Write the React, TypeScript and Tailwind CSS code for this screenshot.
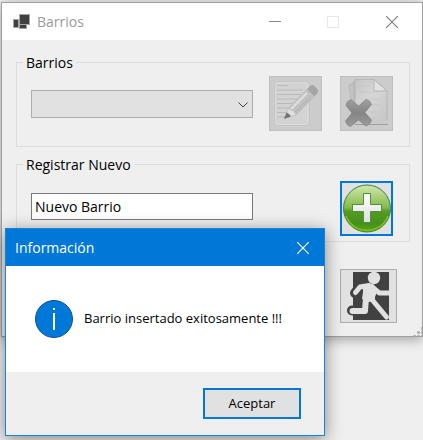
import type { ReactNode } from 'react';

const SANS = "font-['Open_Sans','Noto_Sans',sans-serif]";

function AppIcon() {
  return (
    <svg width="18" height="16" viewBox="0 0 18 16" aria-hidden="true">
      <path fill="#a6a6a6" d="M6 0h11v11H14v4H6v-1H0V5h6z" />
      <path fill="#404040" d="M7 1h9v9H7zM1 6h4v7H1zM7 11h6v3H7z" />
    </svg>
  );
}

function EditIcon() {
  return (
    <svg width="51" height="53" viewBox="0 0 51 53" aria-hidden="true">
      <defs>
        <linearGradient id="pencil" x1="0" y1="0" x2="1" y2="1">
          <stop offset="0" stopColor="#d5d5d5" />
          <stop offset="1" stopColor="#b0b0b0" />
        </linearGradient>
      </defs>
      <rect x="4.5" y="4.5" width="35" height="44" rx="3" fill="#d3d3d3" stroke="#c6c6c6" />
      <rect x="5.5" y="5.5" width="32" height="42" rx="2" fill="none" stroke="#dadada" />
      <path
        stroke="#bababa"
        d="M7 8.500h11M7 13h26M7 17.500h26M7 22h24M7 26.500h19M7 31h13M7 35.500h11M7 40h8"
      />
      <path fill="url(#pencil)" stroke="#b4b4b4" strokeWidth=".6" d="M18.500 31 37 12l7 7.500L26 38z" />
      <path fill="none" stroke="#dedede" strokeWidth="2" d="m21 32 17-17" />
      <path fill="none" stroke="#b0b0b0" strokeWidth="1" d="m24 36 18-18" />
      <path fill="#e0e0e0" stroke="#b8b8b8" strokeWidth=".6" d="m18.500 31-3.500 10L26 38l-2-4-3-1z" />
      <path fill="#747474" d="m16.500 35.500-2.500 6.500 7-2.500-2-2.500z" />
      <path fill="#c2c2c2" d="m35 14 2-2 7.500 7.500-2 2z" />
      <path fill="#a6a6a6" d="m37 12 3-3q2-2 4.500 0l3 3q1.500 2 0 4l-3 3.500z" />
    </svg>
  );
}

function DeleteIcon() {
  return (
    <svg width="51" height="53" viewBox="0 0 51 53" aria-hidden="true">
      <defs>
        <linearGradient id="sheet" x1="0" y1="0" x2="1" y2="1">
          <stop offset="0" stopColor="#c5c5c5" />
          <stop offset=".45" stopColor="#d6d6d6" />
          <stop offset="1" stopColor="#c6c6c6" />
        </linearGradient>
        <linearGradient id="cross" x1="0" y1="0" x2="0" y2="1">
          <stop offset="0" stopColor="#a0a0a0" />
          <stop offset=".5" stopColor="#858585" />
          <stop offset="1" stopColor="#9c9c9c" />
        </linearGradient>
      </defs>
      <path fill="#c2c2c2" stroke="#b4b4b4" strokeWidth=".7" d="m8 8 5-2v18h-3zM10 7l4-3v22" />
      <path fill="url(#sheet)" stroke="#b0b0b0" strokeWidth=".7" d="M14 2.500h19l13 11.500v30H14z" />
      <path fill="#cacaca" d="M14 43h32v5H14z" />
      <path stroke="#9f9f9f" d="M14 47.500h33" />
      <path stroke="#c7c7c7" strokeWidth=".8" d="M19 9h10M19 15h14M19 22h21M20 28h20M29 35h11M29 41h9" />
      <path fill="#e2e2e2" stroke="#a8a8a8" strokeWidth=".7" d="M33 2.500V14h13z" />
      <path
        fill="url(#cross)"
        stroke="#808080"
        strokeWidth=".7"
        d="m10 22.500 7.500 6.500 7.500-6.500q4.500 1 5.500 5l-6.500 8 6.500 7.500q-1 4.500-5.500 6l-7.500-6-8 6.500q-4-1-5-5.500l6.500-8-6-7.500q.5-4.500 5-6z"
      />
    </svg>
  );
}

function AddIcon() {
  return (
    <svg width="49" height="51" viewBox="0 0 49 51" aria-hidden="true">
      <defs>
        <linearGradient id="ball" x1="0" y1="0" x2="0" y2="1">
          <stop offset="0" stopColor="#d2e8ad" />
          <stop offset=".48" stopColor="#86b94c" />
          <stop offset=".56" stopColor="#569b22" />
          <stop offset=".82" stopColor="#44901c" />
          <stop offset="1" stopColor="#5fa81a" />
        </linearGradient>
        <linearGradient id="plus" x1="0" y1="0" x2="0" y2="1">
          <stop offset="0" stopColor="#fff" />
          <stop offset="1" stopColor="#dedede" />
        </linearGradient>
      </defs>
      <circle cx="25" cy="25.500" r="23.500" fill="url(#ball)" stroke="#398044" />
      <path fill="none" stroke="#84c414" strokeWidth="1.500" d="M4 33q6 14 21 14.500Q40 47 46 33" />
      <path
        fill="url(#plus)"
        stroke="#48943b"
        d="M21.500 10.500h7v11h11v7h-11v11h-7v-11h-11v-7h11z"
      />
    </svg>
  );
}

function ExitIcon() {
  return (
    <svg width="55" height="52" viewBox="0 0 55 52" aria-hidden="true">
      <path fill="#414141" d="M12 2h36v48H12z" />
      <g fill="none" strokeLinecap="round" strokeLinejoin="round">
        <path stroke="#414141" strokeWidth="10" d="m14 23 4-5M11 40.500H16" />
        <g stroke="#e1e1e1" strokeWidth="5">
          <path d="m14.500 22.500 4.500-5.500 9-1.500" />
          <path strokeLinecap="butt" d="m32 18 6.500 5H50" />
          <path strokeWidth="6" d="M11.500 41H24l1-13" />
          <path d="m30.500 29 15 18" />
        </g>
      </g>
      <path fill="#e1e1e1" d="M22 14h10l5 5-3 8v3l-6 2-7-3 1-7z" />
      <circle cx="33" cy="8" r="6.200" fill="#e1e1e1" />
    </svg>
  );
}

function CloseIcon() {
  return (
    <svg width="12" height="12" viewBox="0 0 12 12" aria-hidden="true">
      <path stroke="currentColor" strokeWidth="1.200" d="m0 0 12 12M12 0 0 12" />
    </svg>
  );
}

function GroupBox({ id, title, children }: { id: string; title: string; children: ReactNode }) {
  return (
    <fieldset className="min-w-0 border border-[#dcdcdc] pr-4 pl-3.5">
      <legend id={id} className="-ml-2 px-[3px] text-sm leading-[23px]">
        {title}
      </legend>
      {children}
    </fieldset>
  );
}

function MainWindow() {
  return (
    <main className="relative border border-[#a0a0a0] bg-[#efefef] shadow-[0_2px_12px_rgba(0,0,0,0.35)]">
      <header className="flex h-[37px] items-center bg-white pl-[11px] text-[#999]">
        <AppIcon />
        <h1 className="ml-1.5 flex-1 text-sm">Barrios</h1>
        <button type="button" aria-label="Minimizar" className="flex w-[58px] justify-center">
          <span className="h-px w-3 bg-[#888]" />
        </button>
        <button type="button" aria-label="Maximizar" disabled className="flex w-[58px] justify-center">
          <span className="size-3 border border-[#e8e8e8]" />
        </button>
        <button type="button" aria-label="Cerrar" className="flex w-[60px] justify-center text-[#808080]">
          <CloseIcon />
        </button>
      </header>

      <form className="flex flex-col pt-[11px] pr-3 pb-[13px] pl-3.5" onSubmit={(e) => e.preventDefault()}>
        <GroupBox id="barrios" title="Barrios">
          <div className="flex pt-0.5 pb-[15px]">
            <div className="relative mt-3.5 mr-4 h-7 flex-1">
              <select
                aria-labelledby="barrios"
                className="size-full appearance-none border border-[#adadad] bg-[#e1e1e1] px-1 text-sm"
              >
                <option value="" />
              </select>
              <svg
                className="pointer-events-none absolute top-3 right-[5px]"
                width="10"
                height="6"
                viewBox="0 0 10 6"
                aria-hidden="true"
              >
                <path fill="none" stroke="#444" d="m.5.5 4.500 4.500L9.500.5" />
              </svg>
            </div>
            <button
              type="button"
              disabled
              aria-label="Editar"
              className="mr-[18px] h-[55px] w-[53px] border border-[#bfbfbf] bg-[#cccccc]"
            >
              <EditIcon />
            </button>
            <button
              type="button"
              disabled
              aria-label="Eliminar"
              className="h-[55px] w-[53px] border border-[#bfbfbf] bg-[#cccccc]"
            >
              <DeleteIcon />
            </button>
          </div>
        </GroupBox>

        <div className="mt-1.5">
          <GroupBox id="registrar" title="Registrar Nuevo">
            <div className="flex py-[5px]">
              <input
                type="text"
                aria-labelledby="registrar"
                defaultValue="Nuevo Barrio"
                className="mt-3 h-[27px] min-w-0 flex-1 border border-[#7a7a7a] bg-white px-[3px] text-sm"
              />
              <button
                type="submit"
                aria-label="Agregar"
                className="ml-[87px] h-[55px] w-[53px] border-2 border-[#0078d7] bg-[#e1e1e1]"
              >
                <AddIcon />
              </button>
            </div>
          </GroupBox>
        </div>

        <button
          type="button"
          aria-label="Salir"
          className="mt-[27px] mr-[13px] h-[54px] w-[57px] self-end border border-[#adadad] bg-[#e1e1e1]"
        >
          <ExitIcon />
        </button>
      </form>

      <svg className="absolute right-0 bottom-0" width="9" height="9" viewBox="0 0 9 9" aria-hidden="true">
        <path fill="#b8b8b8" d="M8 0h1v3H8zM4 4h3v3H4zM8 4h1v3H8zM0 8h3v1H0zM4 8h3v1H4zM8 8h1v1H8z" />
      </svg>
    </main>
  );
}

function MessageDialog() {
  return (
    <section
      role="dialog"
      aria-labelledby="dialog-title"
      className="absolute top-[228px] left-[5px] w-80 border border-[#1883d7] bg-white shadow-[0_3px_16px_rgba(0,0,0,0.45)]"
    >
      <header className="flex h-[37px] items-center justify-between bg-[#0078d7] pr-[15px] pl-[9px] text-white">
        <h2 id="dialog-title" className="text-sm">
          Información
        </h2>
        <button type="button" aria-label="Cerrar">
          <CloseIcon />
        </button>
      </header>
      <div className="flex h-[106px] items-center gap-[11px] pl-[29px]">
        <svg width="38" height="38" viewBox="0 0 38 38" aria-hidden="true">
          <circle cx="19" cy="19" r="18.500" fill="#0078d7" stroke="#0b5391" />
          <path fill="#fff" d="M18 8h2v2h-2zM18 13h2v17h-2z" />
        </svg>
        <p className="text-[13px]">Barrio insertado exitosamente !!!</p>
      </div>
      <footer className="flex justify-end bg-[#efefef] pt-4 pr-[23px] pb-4">
        <button
          type="button"
          className="h-[31px] w-[98px] border-2 border-[#0078d7] bg-[#e1e1e1] text-[13px]"
        >
          Aceptar
        </button>
      </footer>
    </section>
  );
}

export default function App() {
  return (
    <div className={`${SANS} relative min-h-screen overflow-hidden bg-[#efefef] pt-0.5 pl-px text-black`}>
      <MainWindow />
      <MessageDialog />
    </div>
  );
}
